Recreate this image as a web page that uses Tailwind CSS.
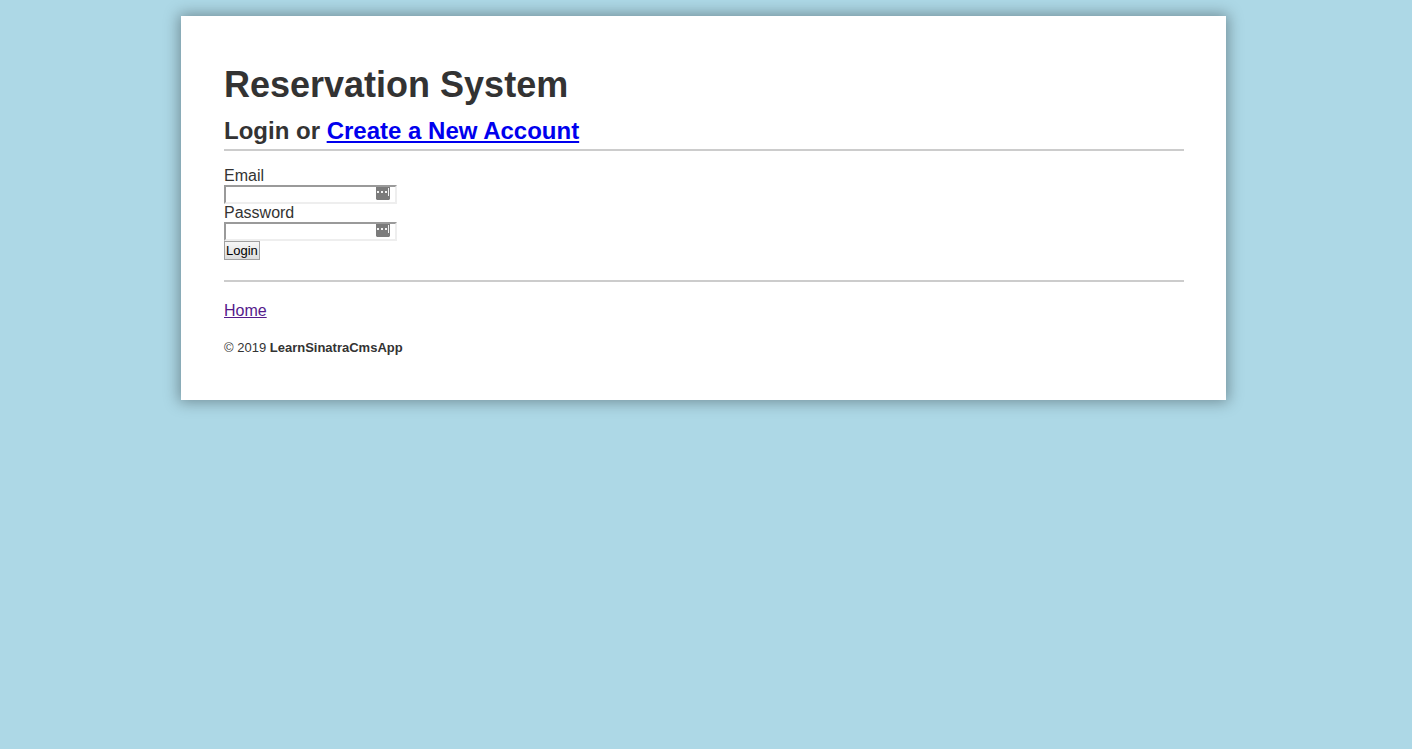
<!DOCTYPE html>
<html lang="en">
<head>
<meta charset="utf-8">
<meta name="viewport" content="width=device-width, initial-scale=1">
<title>Reservation System</title>
<script src="https://cdn.jsdelivr.net/npm/@tailwindcss/browser@4"></script>
</head>
<body class="min-h-screen bg-[#add8e6] pt-4 pr-[5px] pb-4 font-['Liberation_Sans',Arial,sans-serif] text-base leading-[18px] text-[#333]">
<div class="mx-auto max-w-[1045px] bg-white pt-[49px] pr-[42px] pb-11 pl-[43px] shadow-[0_0_14px_2px_rgba(0,0,0,0.35)]">
  <header class="border-b-2 border-[#ccc] pb-1">
    <h1 class="mb-3 text-4xl leading-10 font-bold">Reservation System</h1>
    <h2 class="text-2xl leading-7 font-bold">Login or <a href="#" class="text-[#0000ee] underline">Create a New Account</a></h2>
  </header>
  <main class="border-b-2 border-[#ccc] pt-4 pb-5">
    <form class="flex flex-col items-start">
      <label for="email" class="block">Email</label>
      <div class="relative w-[173px]">
        <input id="email" name="email" type="email" class="block h-[19px] w-full border-2 border-t-[#9a9a9a] border-r-[#eee] border-b-[#eee] border-l-[#9a9a9a] bg-white px-px text-[13px]">
        <svg class="absolute top-[2px] right-[7px] h-[13px] w-[14px]" viewBox="0 0 14 13" aria-hidden="true"><path d="M0 0h14v12l-1 1H1l-1-1z" fill="#7b7b7b"/><path d="M1 4h2v2H1zM5 4h2v2H5zM9 4h2v2H9zM12 1h1v8h-1z" fill="#f2f2f2"/></svg>
      </div>
      <label for="password" class="block">Password</label>
      <div class="relative w-[173px]">
        <input id="password" name="password" type="password" class="block h-[19px] w-full border-2 border-t-[#9a9a9a] border-r-[#eee] border-b-[#eee] border-l-[#9a9a9a] bg-white px-px text-[13px]">
        <svg class="absolute top-[2px] right-[7px] h-[13px] w-[14px]" viewBox="0 0 14 13" aria-hidden="true"><path d="M0 0h14v12l-1 1H1l-1-1z" fill="#7b7b7b"/><path d="M1 4h2v2H1zM5 4h2v2H5zM9 4h2v2H9zM12 1h1v8h-1z" fill="#f2f2f2"/></svg>
      </div>
      <button type="submit" class="h-[19px] border border-[#a0a0a0] bg-linear-to-b from-[#f6f6f6] to-[#dddddd] px-px text-[13px] leading-[17px] text-black">Login</button>
    </form>
  </main>
  <footer class="pt-5">
    <nav><a href="#" class="text-[#551a8b] underline">Home</a></nav>
    <p class="mt-5 text-[13px] leading-4">© 2019 <strong class="font-bold">LearnSinatraCmsApp</strong></p>
  </footer>
</div>
</body>
</html>
